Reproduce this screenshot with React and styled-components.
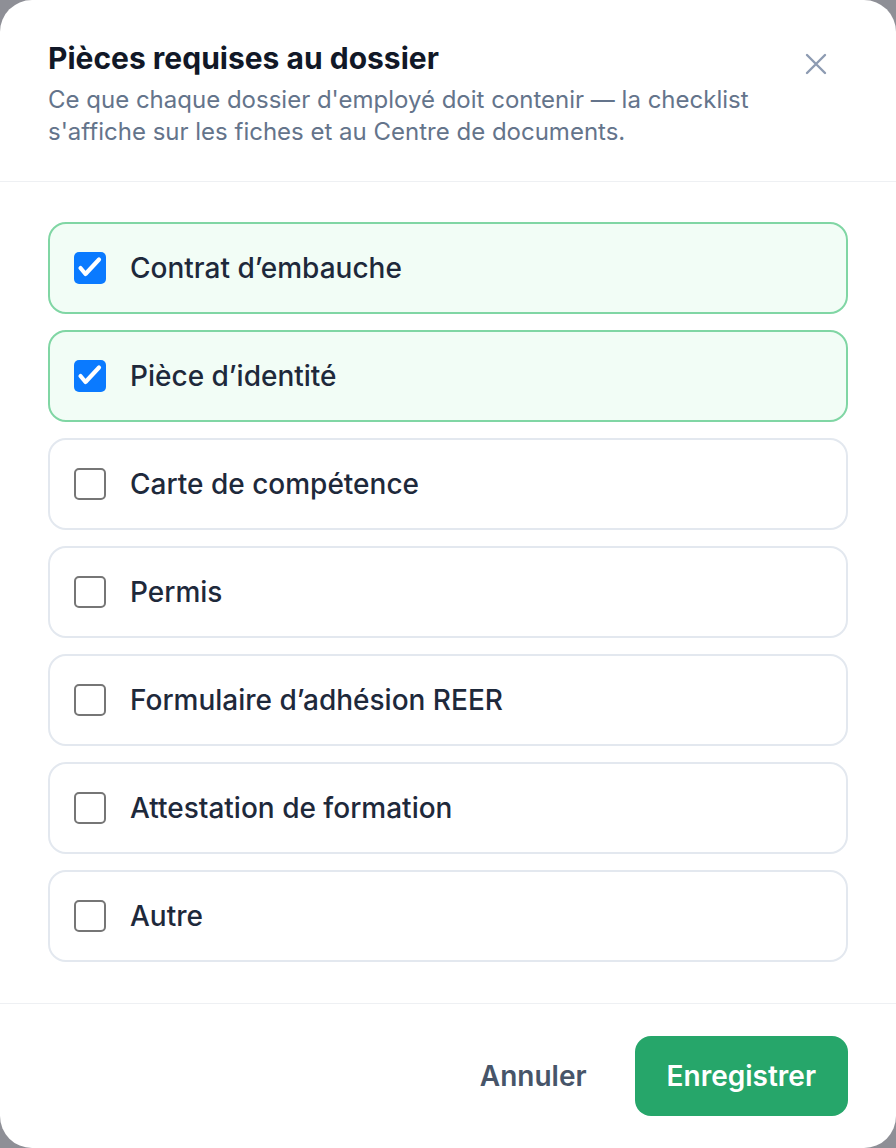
import React, { useState } from "react";
import styled, { createGlobalStyle } from "styled-components";

const GlobalStyle = createGlobalStyle`
  html, body {
    margin: 0;
    padding: 0;
    background: #8e8f96;
  }
  body {
    font-family: Inter, "Noto Sans", sans-serif;
  }
  * {
    box-sizing: border-box;
  }
`;

const DOCS = [
  { id: "contrat", label: "Contrat d\u2019embauche", checked: true },
  { id: "identite", label: "Pi\u00e8ce d\u2019identit\u00e9", checked: true },
  { id: "competence", label: "Carte de comp\u00e9tence", checked: false },
  { id: "permis", label: "Permis", checked: false },
  { id: "reer", label: "Formulaire d\u2019adh\u00e9sion REER", checked: false },
  { id: "formation", label: "Attestation de formation", checked: false },
  { id: "autre", label: "Autre", checked: false },
];

const App = () => {
  const [items, setItems] = useState(DOCS);

  const toggle = (id) => {
    setItems((prev) =>
      prev.map((it) => (it.id === id ? { ...it, checked: !it.checked } : it))
    );
  };

  return (
    <>
      <GlobalStyle />
      <Modal>
        <Header>
          <HeaderText>
            <Title>Pièces requises au dossier</Title>
            <Subtitle>
              Ce que chaque dossier d'employé doit contenir — la checklist
              s'affiche sur les fiches et au Centre de documents.
            </Subtitle>
          </HeaderText>
          <CloseButton aria-label="Fermer">
            <svg width="22" height="22" viewBox="0 0 22 22" fill="none">
              <path
                d="M2 2L20 20M20 2L2 20"
                stroke="currentColor"
                strokeWidth="2.4"
                strokeLinecap="round"
              />
            </svg>
          </CloseButton>
        </Header>

        <List>
          {items.map((it) => (
            <Item key={it.id} $checked={it.checked} onClick={() => toggle(it.id)}>
              <Box $checked={it.checked}>
                {it.checked && (
                  <svg width="32" height="32" viewBox="0 0 32 32" fill="none">
                    <path
                      d="M6.5 16L11.5 22L25 7.5"
                      stroke="#fff"
                      strokeWidth="4.2"
                      strokeLinecap="round"
                      strokeLinejoin="round"
                    />
                  </svg>
                )}
              </Box>
              <Label>{it.label}</Label>
            </Item>
          ))}
        </List>

        <Footer>
          <GhostButton>Annuler</GhostButton>
          <PrimaryButton>Enregistrer</PrimaryButton>
        </Footer>
      </Modal>
    </>
  );
};

export default App;

// Styled Components
const Modal = styled.div`
  width: 896px;
  height: 1148px;
  background: #fff;
  border-radius: 32px;
  display: flex;
  flex-direction: column;
  overflow: hidden;
`;

const Header = styled.div`
  display: flex;
  justify-content: space-between;
  align-items: flex-start;
  padding: 40px 48px 33px 48px;
  border-bottom: 1px solid #eef0f3;
`;

const HeaderText = styled.div`
  display: flex;
  flex-direction: column;
  gap: 8px;
`;

const Title = styled.h2`
  margin: 0;
  font-size: 30px;
  line-height: 36px;
  font-weight: 700;
  color: #111827;
`;

const Subtitle = styled.p`
  margin: 0;
  font-size: 24px;
  line-height: 32px;
  color: #64748b;
  max-width: 720px;
`;

const CloseButton = styled.button`
  border: none;
  background: none;
  color: #8d9bb2;
  padding: 0;
  margin-top: 13px;
  margin-right: 21px;
  width: 22px;
  height: 22px;
  cursor: pointer;
  display: flex;
`;

const List = styled.div`
  flex: 1;
  display: flex;
  flex-direction: column;
  gap: 16px;
  padding: 40px 48px;
  border-bottom: 1px solid #eef0f3;
`;

const Item = styled.label`
  height: 92px;
  display: flex;
  align-items: center;
  gap: 24px;
  padding: 0 24px;
  border-radius: 18px;
  border: 2px solid ${(p) => (p.$checked ? "#80d6a4" : "#e3e8ef")};
  background: ${(p) => (p.$checked ? "#f2fdf6" : "#fff")};
  cursor: pointer;
`;

const Box = styled.span`
  width: 32px;
  height: 32px;
  flex-shrink: 0;
  border-radius: 5px;
  display: flex;
  align-items: center;
  justify-content: center;
  background: ${(p) => (p.$checked ? "#0a7aff" : "#fff")};
  border: ${(p) => (p.$checked ? "none" : "2px solid #767676")};
`;

const Label = styled.span`
  font-size: 28px;
  font-weight: 500;
  color: #1e293b;
`;

const Footer = styled.div`
  display: flex;
  justify-content: flex-end;
  align-items: center;
  gap: 24px;
  padding: 32px 48px;
`;

const GhostButton = styled.button`
  border: none;
  background: none;
  font-family: inherit;
  font-size: 28px;
  font-weight: 600;
  color: #475569;
  padding: 0 24px;
  height: 80px;
  cursor: pointer;
`;

const PrimaryButton = styled.button`
  border: none;
  background: #26a66a;
  color: #fff;
  font-family: inherit;
  font-size: 28px;
  font-weight: 600;
  height: 80px;
  padding: 0 32px;
  border-radius: 16px;
  cursor: pointer;
`;
